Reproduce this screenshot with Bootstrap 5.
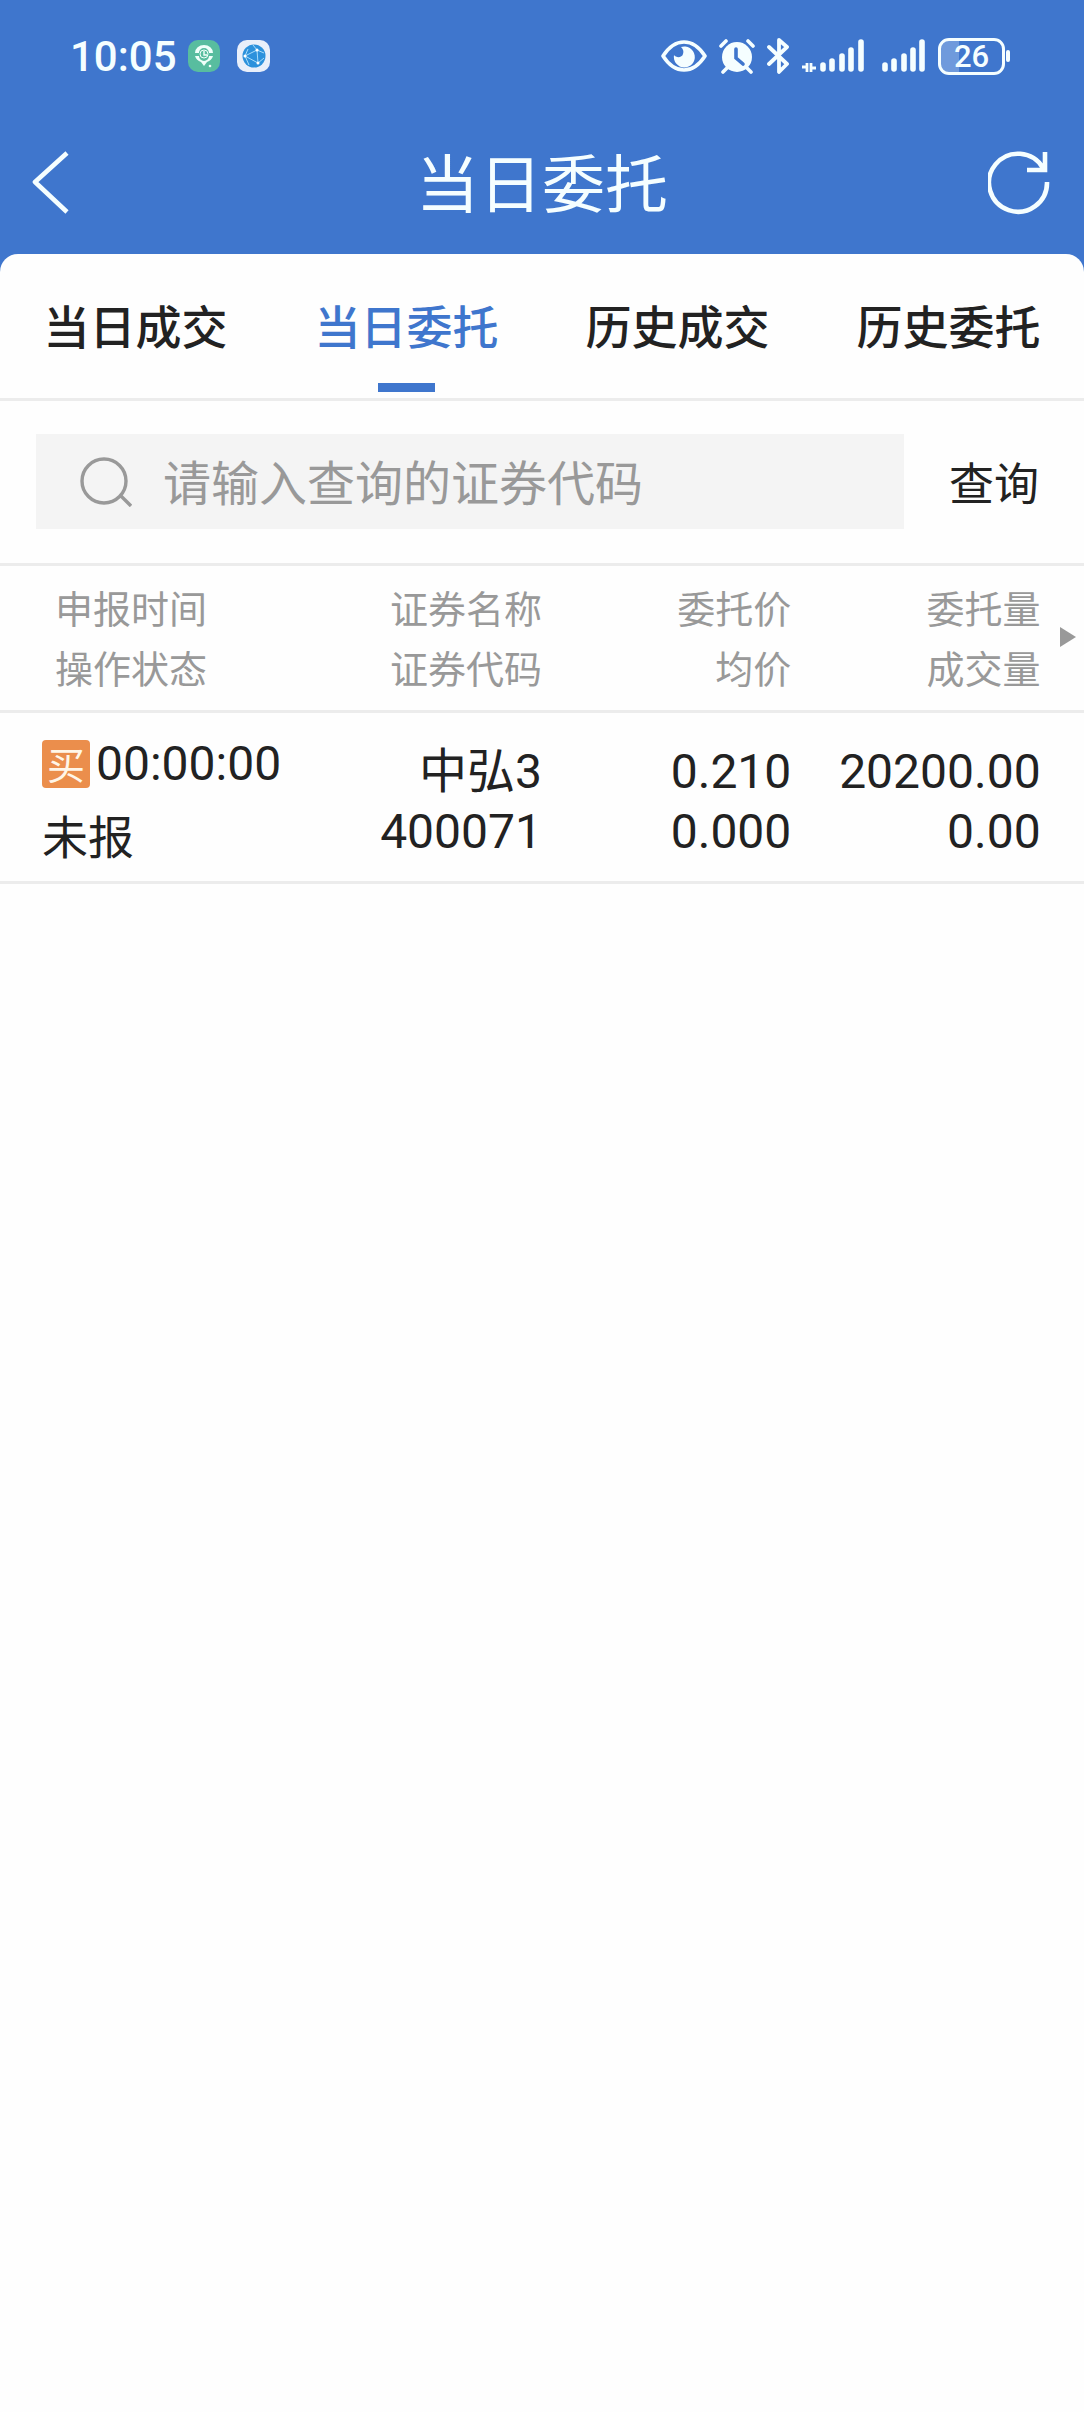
<!DOCTYPE html>
<html lang="zh-CN">
<head>
<meta charset="utf-8">
<meta name="viewport" content="width=device-width, initial-scale=1">
<title>当日委托</title>
<link href="https://cdn.jsdelivr.net/npm/bootstrap@5.3.0/dist/css/bootstrap.min.css" rel="stylesheet">
<style>
  :root { --brand: #3f76cd; --ink: #222; --muted: #999; --line: #ececec; --glow: #f5feff; }
  body { font-family: "Noto Sans CJK SC", "Noto Sans", sans-serif; color: var(--ink); background: #fefefe; }
  svg { display: block; flex: none; }
  .app-top { background: var(--brand); color: var(--glow); }
  .status-bar { height: 112px; padding: 0 74px 0 70px; }
  .clock, .battery, .orders td, .time-text { font-family: Roboto, "Noto Sans CJK SC", sans-serif; }
  .clock { font-size: 42px; line-height: 48px; font-weight: 500; margin-right: 10px; padding-top: 2px; }
  .status-icons { gap: 12px; }
  .battery { width: 67px; height: 37px; border: 3px solid var(--glow); border-radius: 11px; font-size: 31px; line-height: 32px; font-weight: 500;
    background: linear-gradient(90deg, #6f9adc 18px, transparent 18px); }
  .battery-tip { width: 4px; height: 12px; border-radius: 2px; background: var(--glow); margin-left: 1px; }
  .title-bar { height: 142px; padding: 0 32px; }
  .title-bar h1 { font-size: 63px; line-height: 76px; font-weight: 400; padding-bottom: 6px; }
  .icon-btn { background: none; border: 0; padding: 0; color: inherit; }
  .sheet { background: #fefefe; border-radius: 18px 18px 0 0; }
  .tab-strip { border-bottom: 3px solid var(--line); }
  .tab-strip .nav-link { color: var(--ink); font-size: 46px; line-height: 60px; font-weight: 500; padding: 40px 0 6px; border-radius: 0; }
  .tab-strip .nav-link::after { content: ""; display: block; width: 57px; height: 9px; margin: 29px auto 0; }
  .tab-strip .nav-link.active { color: var(--brand); }
  .tab-strip .nav-link.active::after { background: var(--brand); }
  .search-row { padding: 33px 0 34px 36px; border-bottom: 3px solid var(--line); }
  .search-box { height: 95px; background: #f4f4f4; padding: 0 24px 0 44px; gap: 31px; color: var(--muted); }
  .search-box input { border: 0; background: transparent; outline: 0; padding: 0 0 4px; font-size: 48px; line-height: 64px; color: var(--ink); min-width: 0; }
  .search-box input::placeholder { color: var(--muted); opacity: 1; }
  .query-btn { width: 180px; font-size: 45px; line-height: 60px; color: var(--ink); }
  .orders { table-layout: fixed; width: 100%; }
  .orders tr { border-bottom: 3px solid var(--line); }
  .orders th { font-size: 38px; line-height: 60px; font-weight: 400; color: var(--muted); padding: 11px 0 13px; }
  .orders td { font-size: 48px; line-height: 60px; padding: 29px 0 19px; vertical-align: top; }
  .orders th:first-child { padding-left: 55px; }
  .orders td:first-child { padding: 16px 0 12px 42px; }
  .side-cell { font-size: 46px; line-height: 70px; }
  .state-text { font-family: "Noto Sans CJK SC", sans-serif; }
  .buy-tag { flex: none; width: 48px; height: 48px; border-radius: 4px; background: #eb8e4c; color: #fff6e8; font-family: "Noto Sans CJK SC", sans-serif; font-size: 38px; line-height: 46px; }
  .time-text { font-size: 48px; margin-left: 6px; }
  .col-main { width: 25%; } .col-num { width: 23%; } .col-more { width: 4%; }
</style>
<script src="https://cdn.jsdelivr.net/npm/bootstrap@5.3.0/dist/js/bootstrap.bundle.min.js"></script>
</head>
<body>
<header class="app-top">
  <div class="status-bar d-flex align-items-center justify-content-between">
    <div class="d-flex align-items-center">
      <span class="clock">10:05</span>
      <svg width="34" height="34" viewBox="0 0 34 34" aria-hidden="true">
        <rect x="1" y="1" width="32" height="32" rx="10" fill="#58bd9f"/>
        <path d="M8 14a9 8 0 0 1 18 0h-4a5 5 0 0 0-10 0zM8 17h4a5 5 0 0 0 10 0h4a9 9 0 0 1-6 6l-3 4-3-4a9 9 0 0 1-6-6z" fill="#effffa"/>
        <circle cx="17" cy="15" r="4" fill="#58bd9f" stroke="#effffa" stroke-width="1"/>
        <path d="M17 12v4h3" fill="none" stroke="#effffa" stroke-width="1.400"/><circle cx="23" cy="27" r="1.300" fill="#effffa"/>
      </svg>
      <svg class="ms-3" width="34" height="34" viewBox="0 0 34 34" aria-hidden="true">
        <rect x="0" y="1" width="33" height="32" rx="10" fill="#e9effa"/>
        <circle cx="17" cy="17" r="11.500" fill="#2c91dc"/>
        <path d="M8 17 20 11 21 24ZM20 11 27 14M21 24l6-5M8 17l3-7M8 17l4 9M20 11l-4-5" fill="none" stroke="#a8dcfa" stroke-width="1"/>
        <circle cx="8" cy="17" r="1.500" fill="#fff"/><circle cx="20" cy="11" r="1.500" fill="#fff"/><circle cx="21" cy="24" r="1.500" fill="#fff"/>
      </svg>
    </div>
    <div class="status-icons d-flex align-items-center">
      <svg width="46" height="34" viewBox="0 0 46 34" aria-hidden="true">
        <path d="M2 17Q11 3 23 3t21 14Q35 31 23 31T2 17Z" fill="none" stroke="#f5feff" stroke-width="3.600" stroke-linejoin="round"/>
        <path d="M20 8a10.500 10.500 0 1 1-7 8c2 3 8 3 9-1 1-3 0-5-2-7Z" fill="#f5feff"/>
      </svg>
      <svg width="36" height="36" viewBox="0 0 36 36" aria-hidden="true">
        <g stroke="#f5feff" stroke-width="3.600" stroke-linecap="round"><path d="m2 8 5-5M34 8l-5-5M8 30l-4 4M28 30l4 4"/></g>
        <circle cx="18" cy="19" r="15" fill="#f5feff"/>
        <path d="M17 11v9l7 6" fill="none" stroke="#3f76cd" stroke-width="3.600" stroke-linecap="round"/>
      </svg>
      <svg width="22" height="36" viewBox="0 0 22 36" aria-hidden="true">
        <path d="M2 9 20 26 12 34V2l8 7L2 26" fill="none" stroke="#f5feff" stroke-width="3.800" stroke-linecap="round" stroke-linejoin="round"/>
      </svg>
      <svg width="63" height="36" viewBox="0 0 63 36" aria-hidden="true">
        <path d="M1 29h5v-4 9M10 25v9-4h5" fill="none" stroke="#f5feff" stroke-width="2.800"/>
        <g stroke="#f5feff" stroke-width="5.600" stroke-linecap="round"><path d="M22 27v4M31 23v8M41 18v13M50 12v19M60 4v27"/></g>
      </svg>
      <svg width="50" height="36" viewBox="0 0 50 36" aria-hidden="true">
        <g stroke="#f5feff" stroke-width="5.600" stroke-linecap="round"><path d="M9 27v4M18 23v8M28 18v13M37 12v19M46 4v27"/></g>
      </svg>
      <div class="d-flex align-items-center">
        <div class="battery text-center">26</div><div class="battery-tip"></div>
      </div>
    </div>
  </div>
  <div class="title-bar d-flex align-items-center justify-content-between">
    <button class="icon-btn" type="button" aria-label="返回">
      <svg width="64" height="64" viewBox="0 0 64 64"><path d="M35 2 3 31l32 30" fill="none" stroke="currentColor" stroke-width="4.600" stroke-linejoin="round"/></svg>
    </button>
    <h1 class="m-0">当日委托</h1>
    <button class="icon-btn" type="button" aria-label="刷新">
      <svg width="64" height="64" viewBox="0 0 64 64"><path d="M59 31A29 29 0 1 1 55 17M57 1v18H39" fill="none" stroke="currentColor" stroke-width="4.600"/></svg>
    </button>
  </div>
  <div class="sheet">
    <nav class="tab-strip nav nav-justified" aria-label="查询类型">
      <a class="nav-link w-25" href="#">当日成交</a>
      <a class="nav-link w-25 active" href="#" aria-current="page">当日委托</a>
      <a class="nav-link w-25" href="#">历史成交</a>
      <a class="nav-link w-25" href="#">历史委托</a>
    </nav>
  </div>
</header>
<main>
  <form class="search-row d-flex align-items-center">
    <label class="search-box d-flex align-items-center flex-grow-1">
      <svg width="52" height="50" viewBox="0 0 52 50" aria-hidden="true"><circle cx="24" cy="24" r="22" fill="none" stroke="currentColor" stroke-width="3.400"/><path d="m40 38 11 11" stroke="currentColor" stroke-width="3.400"/></svg>
      <input class="flex-grow-1" type="text" placeholder="请输入查询的证券代码" aria-label="证券代码">
    </label>
    <button class="icon-btn query-btn" type="button">查询</button>
  </form>
  <table class="orders">
    <colgroup><col class="col-main"><col class="col-main"><col class="col-num"><col class="col-num"><col class="col-more"></colgroup>
    <thead>
      <tr>
        <th>申报时间<br>操作状态</th>
        <th class="text-end">证券名称<br>证券代码</th>
        <th class="text-end">委托价<br>均价</th>
        <th class="text-end">委托量<br>成交量</th>
        <th aria-label="更多列"><svg class="ms-auto me-2" width="16" height="20" viewBox="0 0 16 20"><path d="M0 0 16 10 0 20Z" fill="#999"/></svg></th>
      </tr>
    </thead>
    <tbody>
      <tr>
        <td>
          <div class="side-cell d-flex align-items-center"><span class="buy-tag text-center">买</span><span class="time-text">00:00:00</span></div>
          <div class="side-cell state-text">未报</div>
        </td>
        <td class="text-end">中弘3<br>400071</td>
        <td class="text-end">0.210<br>0.000</td>
        <td class="text-end">20200.00<br>0.00</td>
        <td></td>
      </tr>
    </tbody>
  </table>
</main>
</body>
</html>
